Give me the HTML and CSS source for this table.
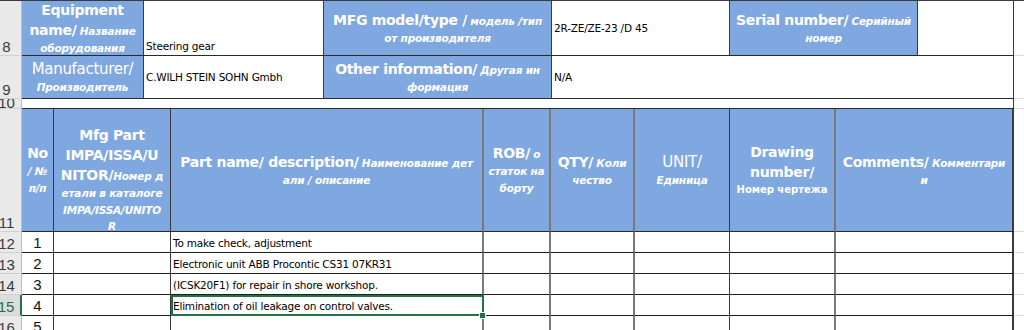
FILE: index.html
```html
<!DOCTYPE html>
<html>
<head>
<meta charset="utf-8">
<link rel="stylesheet" href="styles.css">
</head>
<body>
<div class="sheet">
  <div class="row r8">
    <div class="rh"><span>8</span></div>
    <div class="c lab w122"><div class="t"><b>Equipment</b><br><b>name/</b> <i>Название</i><br><i>оборудования</i></div></div>
    <div class="c val w180 bottom"><span class="d">Steering gear</span></div>
    <div class="c lab w228"><div class="t"><b>MFG model/type /</b> <i>модель /тип</i><br><i>от производителя</i></div></div>
    <div class="c val w178 mid"><span class="d">2R-ZE/ZE-23 /D 45</span></div>
    <div class="c lab w188"><div class="t"><b>Serial number/</b> <i>Серийный</i><br><i>номер</i></div></div>
    <div class="c val w96"></div>
    <div class="tail"></div>
  </div>
  <div class="row r9">
    <div class="rh"><span>9</span></div>
    <div class="c lab w122"><div class="t"><span class="reg">Manufacturer/</span><br><i>Производитель</i></div></div>
    <div class="c val w180 mid"><span class="d">C.WILH STEIN SOHN Gmbh</span></div>
    <div class="c lab w228"><div class="t"><b>Other information/</b> <i>Другая ин</i><br><i>формация</i></div></div>
    <div class="c val w462 mid"><span class="d">N/A</span></div>
    <div class="tail"></div>
  </div>
  <div class="row r10">
    <div class="rh top"><span>10</span></div>
    <div class="c w992"></div>
    <div class="tail"></div>
  </div>
  <div class="row r11">
    <div class="rh"><span>11</span></div>
    <div class="c lab ca"><div class="t"><b>No</b><br><i>/ №</i><br><i>п/п</i></div></div>
    <div class="c lab cb high"><div class="t"><b>Mfg Part</b><br><b>IMPA/ISSA/U</b><br><b>NITOR/</b><i>Номер д</i><br><i>етали в каталоге</i><br><i>IMPA/ISSA/UNITO</i><br><i class="last">R</i></div></div>
    <div class="c lab cc"><div class="t"><b>Part name/ description/</b> <i>Наименование дет</i><br><i>али / описание</i></div></div>
    <div class="c lab cd"><div class="t"><b>ROB/</b> <i>о</i><br><i>статок на</i><br><i>борту</i></div></div>
    <div class="c lab ce"><div class="t"><b>QTY/</b> <i>Коли</i><br><i>чество</i></div></div>
    <div class="c lab cf"><div class="t"><span class="reg">UNIT/</span><br><i>Единица</i></div></div>
    <div class="c lab cg"><div class="t"><b>Drawing</b><br><b>number/</b><br><span class="sm">Номер чертежа</span></div></div>
    <div class="c lab ch"><div class="t"><b>Comments/</b> <i>Комментари</i><br><i>и</i></div></div>
    <div class="tail"></div>
  </div>
  <div class="row dr">
    <div class="rh"><span>12</span></div>
    <div class="c ca num">1</div>
    <div class="c cb"></div>
    <div class="c cc txt"><span class="d">To make check, adjustment</span></div>
    <div class="c cd"></div><div class="c ce"></div><div class="c cf"></div><div class="c cg"></div><div class="c ch"></div>
    <div class="tail"></div>
  </div>
  <div class="row dr">
    <div class="rh"><span>13</span></div>
    <div class="c ca num">2</div>
    <div class="c cb"></div>
    <div class="c cc txt"><span class="d">Electronic unit ABB Procontic CS31 07KR31</span></div>
    <div class="c cd"></div><div class="c ce"></div><div class="c cf"></div><div class="c cg"></div><div class="c ch"></div>
    <div class="tail"></div>
  </div>
  <div class="row dr">
    <div class="rh"><span>14</span></div>
    <div class="c ca num">3</div>
    <div class="c cb"></div>
    <div class="c cc txt"><span class="d">(ICSK20F1) for repair in shore workshop.</span></div>
    <div class="c cd"></div><div class="c ce"></div><div class="c cf"></div><div class="c cg"></div><div class="c ch"></div>
    <div class="tail"></div>
  </div>
  <div class="row dr">
    <div class="rh sel"><span>15</span></div>
    <div class="c ca num">4</div>
    <div class="c cb"></div>
    <div class="c cc txt active"><span class="d">Elimination of oil leakage on control valves.</span></div>
    <div class="c cd"></div><div class="c ce"></div><div class="c cf"></div><div class="c cg"></div><div class="c ch"></div>
    <div class="tail"></div>
  </div>
  <div class="row dr">
    <div class="rh"><span>16</span></div>
    <div class="c ca num">5</div>
    <div class="c cb"></div>
    <div class="c cc txt"></div>
    <div class="c cd"></div><div class="c ce"></div><div class="c cf"></div><div class="c cg"></div><div class="c ch"></div>
    <div class="tail"></div>
  </div>
</div>
</body>
</html>
```

FILE: styles.css
```css
html, body {
  margin: 0;
  padding: 0;
  background: #ffffff;
}
.sheet {
  width: 1024px;
  height: 330px;
  overflow: hidden;
  border-top: 1px solid #3a3a3a;
  box-sizing: border-box;
}
.row {
  display: flex;
  box-sizing: border-box;
}
.r8 { height: 55px; }
.r9 { height: 43px; }
.r10 { height: 10px; }
.r11 { height: 123px; }
.dr { height: 21px; }

.rh {
  flex: none;
  width: 22px;
  box-sizing: border-box;
  background: #e9e9e9;
  border-right: 1px solid #bcbcbc;
  border-bottom: 1px solid #d2d2d2;
  display: flex;
  align-items: flex-end;
  justify-content: center;
  padding-right: 8px;
  overflow: hidden;
  font-family: "Liberation Sans", Arial, sans-serif;
  font-size: 15px;
  line-height: 17px;
  color: #3b3b3b;
}
.rh span { white-space: nowrap; }
.rh.top { align-items: flex-start; }
.rh.top span { margin-top: -5px; }
.rh.sel {
  color: #217346;
  background: #dcdcdc;
  border-right: 2px solid #217346;
}

.c {
  flex: none;
  box-sizing: border-box;
  border-right: 1px solid #3a3a3a;
  border-bottom: 1px solid #2a2a2a;
  display: flex;
  overflow: hidden;
  position: relative;
}
.lab {
  background: #80a8e0;
  color: #ffffff;
  align-items: center;
  justify-content: center;
  text-align: center;
}
.lab.high {
  align-items: flex-start;
  padding-top: 16px;
}
.val { background: #ffffff; }
.bottom { align-items: flex-end; padding: 0 0 3px 2px; }
.mid { align-items: center; padding-left: 2px; }

.t {
  white-space: nowrap;
  font-family: "DejaVu Sans", Verdana, sans-serif;
  font-size: 10px;
  line-height: 16px;
}
.t b {
  font-weight: bold;
  font-size: 14px;
  line-height: 20px;
  letter-spacing: -0.3px;
}
.t i {
  font-weight: bold;
  font-style: italic;
  font-size: 10.5px;
  line-height: 16px;
  letter-spacing: -0.2px;
}
.t i.last { line-height: 14px; }
.t .reg {
  font-size: 15px;
  line-height: 20px;
  letter-spacing: -0.3px;
}
.t .sm {
  font-weight: bold;
  font-size: 10px;
  line-height: 16px;
}

.d {
  font-family: "DejaVu Sans", Verdana, sans-serif;
  font-size: 10.5px;
  letter-spacing: -0.2px;
  color: #000000;
  white-space: nowrap;
}

.w122 { width: 122px; }
.w180 { width: 180px; }
.w228 { width: 228px; }
.w178 { width: 178px; }
.w188 { width: 188px; }
.w96 { width: 96px; }
.w462 { width: 462px; }
.w992 { width: 992px; }

.ca { width: 32px; }
.cb { width: 117px; }
.cc { width: 313px; border-right: 2px solid #7a7a7a; }
.cd { width: 67px; border-right: 2px solid #7a7a7a; }
.ce { width: 84px; border-right: 2px solid #7a7a7a; }
.cf { width: 95px; }
.cg { width: 106px; border-right: 2px solid #7a7a7a; }
.ch { width: 178px; border-right: 2px solid #3a3a3a; }

.dr .c { border-bottom: 1px solid #1e1e1e; }

.num {
  justify-content: center;
  align-items: flex-end;
  font-family: "Liberation Sans", Arial, sans-serif;
  font-size: 15px;
  line-height: 18px;
  color: #111111;
}
.txt {
  align-items: flex-end;
  padding: 0 0 3px 2px;
}
.active {
  outline: 2px solid #217346;
  outline-offset: -2px;
  overflow: visible;
  z-index: 2;
}
.active::after {
  content: "";
  position: absolute;
  right: -4px;
  bottom: -4px;
  width: 5px;
  height: 5px;
  background: #217346;
  border: 1px solid #ffffff;
}

.tail {
  flex: 1;
  border-bottom: 1px solid #dadada;
  box-sizing: border-box;
}
```
